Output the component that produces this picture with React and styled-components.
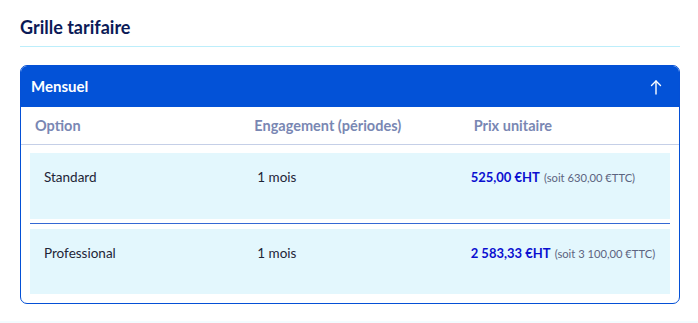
import React from "react";
import styled, { createGlobalStyle } from "styled-components";

const Global = createGlobalStyle`
  html, body { margin: 0; padding: 0; background: #ffffff; }
  body { font-family: "Lato", "Noto Sans", sans-serif; }
`;

const Page = styled.div`
  width: 660px;
  padding: 16px 20px 0;
  min-height: 323px;
  box-sizing: content-box;
  background: linear-gradient(to bottom, #ffffff 0, #ffffff 321px, #f3fcff 321px);
`;

const Title = styled.h2`
  margin: 0;
  padding-bottom: 8px;
  font-size: 18px;
  line-height: 22px;
  font-weight: 700;
  color: #0b1a57;
  border-bottom: 1px solid #bdeefb;
`;

const Card = styled.section`
  margin-top: 18px;
  border: 1px solid #0450d6;
  border-radius: 7px;
  overflow: hidden;
  background: #fff;
`;

const CardHeader = styled.div`
  height: 41px;
  background: #0352d7;
  display: flex;
  align-items: center;
  justify-content: space-between;
  padding: 0 17px 0 10px;
  color: #fff;
  font-size: 15px;
  font-weight: 700;
  line-height: 20px;
  & > span { margin-top: -2px; }
`;

const Grid = styled.div`
  display: grid;
  grid-template-columns: repeat(3, 1fr);
`;

const HeadRow = styled(Grid)`
  height: 37px;
  border-bottom: 1px solid #c5cfe7;
  align-items: center;
`;

const HeadCell = styled.div`
  padding-left: 14px;
  font-size: 14.5px;
  font-weight: 700;
  color: #7987b3;
  white-space: nowrap;
`;

const Body = styled.div`
  padding: 8px 9px 9px;
`;

const Row = styled(Grid)`
  height: ${(p) => p.$h}px;
  background: #e3f7fd;
  align-items: start;
  padding-top: 15px;
  box-sizing: border-box;
`;

const Cell = styled.div`
  padding-left: 14px;
  font-size: 13.5px;
  line-height: 18px;
  color: #1e2537;
  white-space: nowrap;
`;

const Divider = styled.div`
  height: 1px;
  background: #3468d4;
  margin: 4px 0 5px;
`;

const Price = styled.span`
  font-weight: 700;
  color: #0b0fd0;
  font-size: 13px;
`;

const Ttc = styled.span`
  font-size: 11.2px;
  color: #5c6480;
  margin-left: 4px;
`;

const ArrowUp = () => (
  <svg width="12" height="16" viewBox="0 0 12 16" fill="none" stroke="#fff" strokeWidth="1.4" strokeLinecap="round" strokeLinejoin="round">
    <path d="M6 15V2" />
    <path d="M1.5 6.5L6 2l4.5 4.5" />
  </svg>
);

const rows = [
  { name: "Standard", eng: "1 mois", ht: "525,00 €HT", ttc: "(soit 630,00 €TTC)", h: 66 },
  { name: "Professional", eng: "1 mois", ht: "2 583,33 €HT", ttc: "(soit 3 100,00 €TTC)", h: 65 },
];

export default function App() {
  return (
    <>
      <Global />
      <Page>
        <Title>Grille tarifaire</Title>
        <Card>
          <CardHeader>
            <span>Mensuel</span>
            <ArrowUp />
          </CardHeader>
          <HeadRow>
            <HeadCell>Option</HeadCell>
            <HeadCell>Engagement (périodes)</HeadCell>
            <HeadCell>Prix unitaire</HeadCell>
          </HeadRow>
          <Body>
            {rows.map((r, i) => (
              <React.Fragment key={r.name}>
                {i > 0 && <Divider />}
                <Row $h={r.h}>
                  <Cell>{r.name}</Cell>
                  <Cell>{r.eng}</Cell>
                  <Cell>
                    <Price>{r.ht}</Price>
                    <Ttc>{r.ttc}</Ttc>
                  </Cell>
                </Row>
              </React.Fragment>
            ))}
          </Body>
        </Card>
      </Page>
    </>
  );
}
